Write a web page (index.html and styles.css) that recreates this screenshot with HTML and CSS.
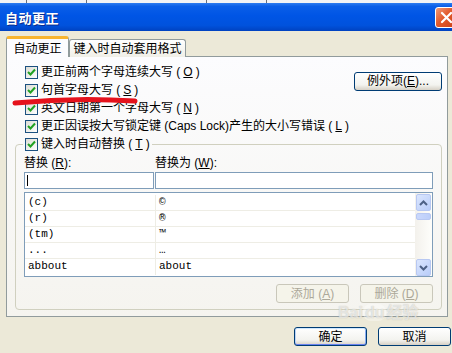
FILE: index.html
```html
<!DOCTYPE html>
<html lang="zh-CN">
<head>
    <meta charset="UTF-8">
    <title>自动更正</title>
    <link rel="stylesheet" href="styles.css">
</head>
<body>

    <div class="screen-top">
        <span class="tick" style="width: 27px;"></span>
        <span class="tick" style="width: 60px;"></span>
        <span class="tick" style="width: 120px;"></span>
        <span class="tick" style="width: 60px;"></span>
    </div>

    <div class="titlebar">
        <span class="title">自动更正</span>
        <span class="close-btn">
            <svg width="13" height="13" viewBox="0 0 13 13"><path d="M2 2 L11 11 M11 2 L2 11" stroke="#fff" stroke-width="2.2" stroke-linecap="round"/></svg>
        </span>
    </div>

    <div class="dialog">
        <div class="tabs">
            <div class="tab active">自动更正</div>
            <div class="tab">键入时自动套用格式</div>
        </div>

        <div class="panel">
            <div class="top-options">
                <div class="option-col">
                    <div class="check-row"><span class="checkbox"><svg width="11" height="11" viewBox="0 0 11 11"><path d="M2 5 L4.5 7.5 L9 2.5" fill="none" stroke="#21a121" stroke-width="2"/></svg></span>更正前两个字母连续大写 (<u>O</u>)</div>
                    <div class="check-row"><span class="checkbox"><svg width="11" height="11" viewBox="0 0 11 11"><path d="M2 5 L4.5 7.5 L9 2.5" fill="none" stroke="#21a121" stroke-width="2"/></svg></span>句首字母大写 (<u>S</u>)</div>
                </div>
                <button class="btn">例外项(<u>E</u>)...</button>
            </div>
            <div class="check-row"><span class="checkbox"><svg width="11" height="11" viewBox="0 0 11 11"><path d="M2 5 L4.5 7.5 L9 2.5" fill="none" stroke="#21a121" stroke-width="2"/></svg></span>英文日期第一个字母大写 (<u>N</u>)</div>
            <div class="check-row"><span class="checkbox"><svg width="11" height="11" viewBox="0 0 11 11"><path d="M2 5 L4.5 7.5 L9 2.5" fill="none" stroke="#21a121" stroke-width="2"/></svg></span>更正因误按大写锁定键 (Caps Lock)产生的大小写错误 (<u>L</u>)</div>

            <fieldset class="group">
                <legend class="check-row"><span class="checkbox"><svg width="11" height="11" viewBox="0 0 11 11"><path d="M2 5 L4.5 7.5 L9 2.5" fill="none" stroke="#21a121" stroke-width="2"/></svg></span>键入时自动替换 (<u>T</u>)</legend>

                <div class="field-grid">
                    <span class="field-label">替换 (<u>R</u>):</span>
                    <span class="field-label">替换为 (<u>W</u>):</span>
                    <div class="textbox"><span class="caret"></span></div>
                    <div class="textbox"></div>
                </div>

                <div class="listbox">
                    <div class="list-rows">
                        <div class="list-row"><span class="cell">(c)</span><span class="cell">©</span></div>
                        <div class="list-row"><span class="cell">(r)</span><span class="cell">®</span></div>
                        <div class="list-row"><span class="cell">(tm)</span><span class="cell">™</span></div>
                        <div class="list-row"><span class="cell">...</span><span class="cell">…</span></div>
                        <div class="list-row"><span class="cell">abbout</span><span class="cell">about</span></div>
                    </div>
                    <div class="scrollbar">
                        <span class="scroll-btn"><svg width="9" height="6" viewBox="0 0 9 6"><path d="M1 5 L4.5 1.5 L8 5" fill="none" stroke="#4d6185" stroke-width="2"/></svg></span>
                        <span class="scroll-thumb"></span>
                        <span class="scroll-btn down"><svg width="9" height="6" viewBox="0 0 9 6"><path d="M1 1 L4.5 4.5 L8 1" fill="none" stroke="#4d6185" stroke-width="2"/></svg></span>
                    </div>
                </div>

                <div class="group-actions">
                    <button class="btn disabled">添加 (<u>A</u>)</button>
                    <button class="btn disabled">删除 (<u>D</u>)</button>
                </div>
            </fieldset>
        </div>

        <div class="footer">
            <button class="btn default">确定</button>
            <button class="btn">取消</button>
        </div>
    </div>

    <!-- marker stroke drawn over the screenshot -->
    <svg class="marker" width="130" height="14" viewBox="0 0 130 14">
        <path d="M3 8 Q63 2 123 6" fill="none" stroke="#e5121c" stroke-width="5" stroke-linecap="round"/>
    </svg>

    <div class="watermark">Bai<span class="paw">du</span>经验</div>

</body>
</html>
```

FILE: styles.css
```css
* {
    margin: 0;
    padding: 0;
    box-sizing: border-box;
}

body {
    width: 452px;
    height: 353px;
    overflow: hidden;
    position: relative;
    background-color: #ece9d8;
    font-family: "Liberation Sans", "Noto Sans CJK SC", sans-serif;
    font-size: 12px;
    color: #000;
    text-autospace: no-autospace;
}

u {
    text-decoration: underline;
    text-underline-offset: 1px;
}

.screen-top {
    height: 3px;
    display: flex;
    background-color: #f2f3f6;
}

.tick {
    height: 3px;
    border-right: 1px solid #6a6f78;
}

.titlebar {
    height: 28px;
    display: flex;
    align-items: center;
    padding-left: 5px;
    background: linear-gradient(#2d7cf0 0%, #0a5ee8 12%, #0055e5 45%, #0052dd 80%, #0042c0 100%);
}

.title {
    color: white;
    font-family: "Noto Sans CJK SC", sans-serif;
    font-size: 13px;
    font-weight: bold;
    letter-spacing: 0.5px;
    text-shadow: 1px 1px 0 #0a2c8c;
}

.close-btn {
    margin-left: auto;
    margin-right: -5px;
    width: 22px;
    height: 21px;
    display: flex;
    align-items: center;
    justify-content: center;
    border: 1px solid #fff;
    border-radius: 3px;
    background: linear-gradient(135deg, #f09a78 0%, #e25a2c 45%, #c8401a 100%);
}

.dialog {
    padding: 5px 0 0 6px;
}

.tabs {
    display: flex;
    align-items: flex-end;
    margin-bottom: -1px;
}

.tab {
    height: 18px;
    width: 117px;
    display: flex;
    align-items: center;
    justify-content: center;
    border: 1px solid #919b9c;
    border-bottom: none;
    border-radius: 3px 3px 0 0;
    background: linear-gradient(#ffffff, #f0efe7);
    line-height: 1;
}

.tab.active {
    position: relative;
    z-index: 1;
    height: 21px;
    width: 63px;
    padding-top: 1px;
    background: #fcfcfe;
    border-top: 3px solid #f8b530;
}

.panel {
    width: 442px;
    padding: 6px 5px 6px 18px;
    border: 1px solid #919b9c;
    background: linear-gradient(#fcfcfe, #f5f4ef);
}

.top-options {
    display: flex;
    align-items: center;
}

.option-col {
    flex-grow: 1;
}

.check-row {
    height: 18px;
    display: flex;
    align-items: center;
    gap: 3px;
    white-space: nowrap;
    line-height: 1;
}

.checkbox {
    width: 13px;
    height: 13px;
    display: flex;
    align-items: center;
    justify-content: center;
    border: 1px solid #1c5180;
    background: linear-gradient(135deg, #dcdcd4, #ffffff);
}

.btn {
    width: 73px;
    height: 19px;
    font-family: "Liberation Sans", "Noto Sans CJK SC", sans-serif;
    font-size: 12px;
    line-height: 1;
    color: #000;
    border: 1px solid #003c74;
    border-radius: 3px;
    background: linear-gradient(#ffffff 0%, #f3f3ef 70%, #d6d0c5 100%);
}

.top-options .btn {
    width: 88px;
}

.btn.disabled {
    color: #aca899;
    border-color: #c9c7ba;
    background: #f5f4ea;
}

.btn.default {
    box-shadow: inset 0 1px 0 #cee7ff, inset 0 -1px 0 #6982ee, inset 1px 0 0 #bcd4f6, inset -1px 0 0 #89adf4;
}

.group {
    margin-left: -10px;
    padding: 0 8px 6px 8px;
    border: 1px solid #d0d0bf;
    border-radius: 4px;
}

.group legend {
    margin-left: -1px;
    padding: 0 2px;
}

.field-grid {
    display: grid;
    grid-template-columns: 130px 1fr;
    column-gap: 1px;
}

.field-label {
    height: 19px;
    display: flex;
    align-items: center;
    line-height: 1;
}

.textbox {
    height: 17px;
    border: 1px solid #7f9db9;
    background-color: white;
    padding: 2px 0 0 2px;
}

.caret {
    display: block;
    width: 1px;
    height: 11px;
    background-color: #000;
}

.listbox {
    margin-top: 3px;
    height: 85px;
    display: flex;
    border: 1px solid #7f9db9;
    background-color: white;
}

.list-rows {
    flex-grow: 1;
    padding-top: 2px;
}

.list-row {
    height: 16px;
    display: grid;
    grid-template-columns: 131px 1fr;
    border-bottom: 1px solid #eeede5;
}

.list-row:last-child {
    border-bottom: none;
}

.cell {
    padding-left: 3px;
    font-family: "Liberation Mono", monospace;
    font-size: 11px;
    line-height: 15px;
}

.cell:first-child {
    border-right: 1px solid #eeede5;
}

.scrollbar {
    width: 17px;
    display: flex;
    flex-direction: column;
    gap: 2px;
    padding: 1px 1px 0 1px;
    background: linear-gradient(90deg, #f3f1ec, #fefefb);
}

.scroll-btn {
    height: 17px;
    display: flex;
    align-items: center;
    justify-content: center;
    border: 1px solid #b8c8f2;
    border-radius: 2px;
    background: linear-gradient(135deg, #dbe6fe, #b9cdf9);
}

.scroll-btn.down {
    margin-top: auto;
}

.scroll-thumb {
    height: 7px;
    border: 1px solid #b8c8f2;
    border-radius: 2px;
    background: linear-gradient(90deg, #cad8fc, #bccefa);
}

.group-actions {
    display: flex;
    justify-content: flex-end;
    gap: 11px;
    margin-top: 7px;
}

.footer {
    display: flex;
    justify-content: flex-end;
    gap: 11px;
    margin-top: 10px;
    padding-right: 1px;
}

.marker {
    position: absolute;
    left: 12px;
    top: 95px;
}

.watermark {
    position: absolute;
    left: 338px;
    top: 304px;
    font-family: "Liberation Sans", "Noto Sans CJK SC", sans-serif;
    font-size: 16px;
    line-height: 18px;
    font-weight: bold;
    color: rgba(255, 255, 255, 0.6);
    text-shadow: 0 0 1px rgba(150, 148, 135, 0.6);
}

.paw {
    padding: 0 2px;
    border-radius: 8px;
    background: rgba(255, 255, 255, 0.35);
}
```
